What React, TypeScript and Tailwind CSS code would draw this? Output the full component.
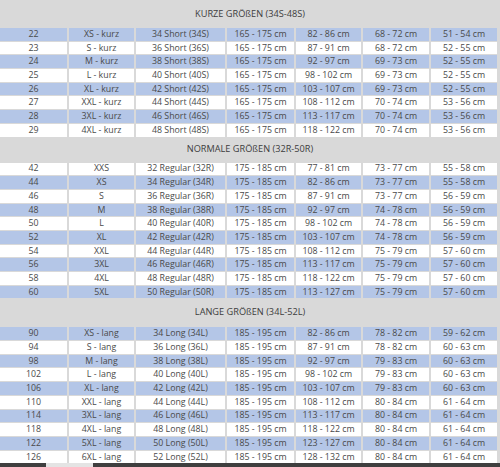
type Row = { c: string[]; blue: boolean };

const kurz: Row[] = [
  ['22', 'XS - kurz', '34 Short (34S)', '165 - 175 cm', '82 - 86 cm', '68 - 72 cm', '51 - 54 cm'],
  ['23', 'S - kurz', '36 Short (36S)', '165 - 175 cm', '87 - 91 cm', '68 - 72 cm', '52 - 55 cm'],
  ['24', 'M - kurz', '38 Short (38S)', '165 - 175 cm', '92 - 97 cm', '69 - 73 cm', '52 - 55 cm'],
  ['25', 'L - kurz', '40 Short (40S)', '165 - 175 cm', '98 - 102 cm', '69 - 73 cm', '52 - 55 cm'],
  ['26', 'XL - kurz', '42 Short (42S)', '165 - 175 cm', '103 - 107 cm', '69 - 73 cm', '52 - 55 cm'],
  ['27', 'XXL - kurz', '44 Short (44S)', '165 - 175 cm', '108 - 112 cm', '70 - 74 cm', '53 - 56 cm'],
  ['28', '3XL - kurz', '46 Short (46S)', '165 - 175 cm', '113 - 117 cm', '70 - 74 cm', '53 - 56 cm'],
  ['29', '4XL - kurz', '48 Short (48S)', '165 - 175 cm', '118 - 122 cm', '70 - 74 cm', '53 - 56 cm'],
].map((c, i) => ({ c, blue: i % 2 === 0 }));

const normal: Row[] = [
  ['42', 'XXS', '32 Regular (32R)', '175 - 185 cm', '77 - 81 cm', '73 - 77 cm', '55 - 58 cm'],
  ['44', 'XS', '34 Regular (34R)', '175 - 185 cm', '82 - 86 cm', '73 - 77 cm', '55 - 58 cm'],
  ['46', 'S', '36 Regular (36R)', '175 - 185 cm', '87 - 91 cm', '73 - 77 cm', '56 - 59 cm'],
  ['48', 'M', '38 Regular (38R)', '175 - 185 cm', '92 - 97 cm', '74 - 78 cm', '56 - 59 cm'],
  ['50', 'L', '40 Regular (40R)', '175 - 185 cm', '98 - 102 cm', '74 - 78 cm', '56 - 59 cm'],
  ['52', 'XL', '42 Regular (42R)', '175 - 185 cm', '103 - 107 cm', '74 - 78 cm', '56 - 59 cm'],
  ['54', 'XXL', '44 Regular (44R)', '175 - 185 cm', '108 - 112 cm', '75 - 79 cm', '57 - 60 cm'],
  ['56', '3XL', '46 Regular (46R)', '175 - 185 cm', '113 - 117 cm', '75 - 79 cm', '57 - 60 cm'],
  ['58', '4XL', '48 Regular (48R)', '175 - 185 cm', '118 - 122 cm', '75 - 79 cm', '57 - 60 cm'],
  ['60', '5XL', '50 Regular (50R)', '175 - 185 cm', '113 - 127 cm', '75 - 79 cm', '57 - 60 cm'],
].map((c, i) => ({ c, blue: i % 2 === 1 }));

const lang: Row[] = [
  ['90', 'XS - lang', '34 Long (34L)', '185 - 195 cm', '82 - 86 cm', '78 - 82 cm', '59 - 62 cm'],
  ['94', 'S - lang', '36 Long (36L)', '185 - 195 cm', '87 - 91 cm', '78 - 82 cm', '60 - 63 cm'],
  ['98', 'M - lang', '38 Long (38L)', '185 - 195 cm', '92 - 97 cm', '79 - 83 cm', '60 - 63 cm'],
  ['102', 'L - lang', '40 Long (40L)', '185 - 195 cm', '98 - 102 cm', '79 - 83 cm', '60 - 63 cm'],
  ['106', 'XL - lang', '42 Long (42L)', '185 - 195 cm', '103 - 107 cm', '79 - 83 cm', '60 - 63 cm'],
  ['110', 'XXL - lang', '44 Long (44L)', '185 - 195 cm', '108 - 112 cm', '80 - 84 cm', '61 - 64 cm'],
  ['114', '3XL - lang', '46 Long (46L)', '185 - 195 cm', '113 - 117 cm', '80 - 84 cm', '61 - 64 cm'],
  ['118', '4XL - lang', '48 Long (48L)', '185 - 195 cm', '118 - 122 cm', '80 - 84 cm', '61 - 64 cm'],
  ['122', '5XL - lang', '50 Long (50L)', '185 - 195 cm', '123 - 127 cm', '80 - 84 cm', '61 - 64 cm'],
  ['126', '6XL - lang', '52 Long (52L)', '185 - 195 cm', '128 - 132 cm', '80 - 84 cm', '61 - 64 cm'],
].map((c, i) => ({ c, blue: i % 2 === 0 }));

function Section({ title, rows, head }: { title: string; rows: Row[]; head: string }) {
  return (
    <div>
      <div className={`flex items-center justify-center text-[9.2px] text-[#3d3d3d] ${head}`}>{title}</div>
      {rows.map((r) => (
        <div
          key={r.c[0]}
          className="grid grid-cols-[67px_65px_89px_67px_65px_66px_66px] gap-x-[2px] pt-px h-[13.7px]"
        >
          {r.c.map((v, j) => (
            <div
              key={j}
              className={`flex items-center justify-center leading-none ${r.blue ? 'bg-[#b4c6e7]' : 'bg-white'}`}
            >
              {v}
            </div>
          ))}
        </div>
      ))}
    </div>
  );
}

export default function App() {
  return (
    <div className="w-[500px] h-[467px] overflow-hidden bg-[#d9d9d9] text-[8.8px] text-[#4a4a4a] font-['Open_Sans',sans-serif] flex flex-col">
      <Section title="KURZE GRÖßEN (34S-48S)" rows={kurz} head="h-[27px]" />
      <Section title="NORMALE GRÖßEN (32R-50R)" rows={normal} head="h-[25px]" />
      <Section title="LANGE GRÖßEN (34L-52L)" rows={lang} head="h-[28px]" />
      <div className="flex h-[4px] mt-auto">
        <div className="w-[46px] bg-[#3f3f3f]" />
        <div className="w-[47px] bg-[#e4e4e4]" />
        <div className="flex-1 bg-[#3f3f3f]" />
      </div>
    </div>
  );
}
